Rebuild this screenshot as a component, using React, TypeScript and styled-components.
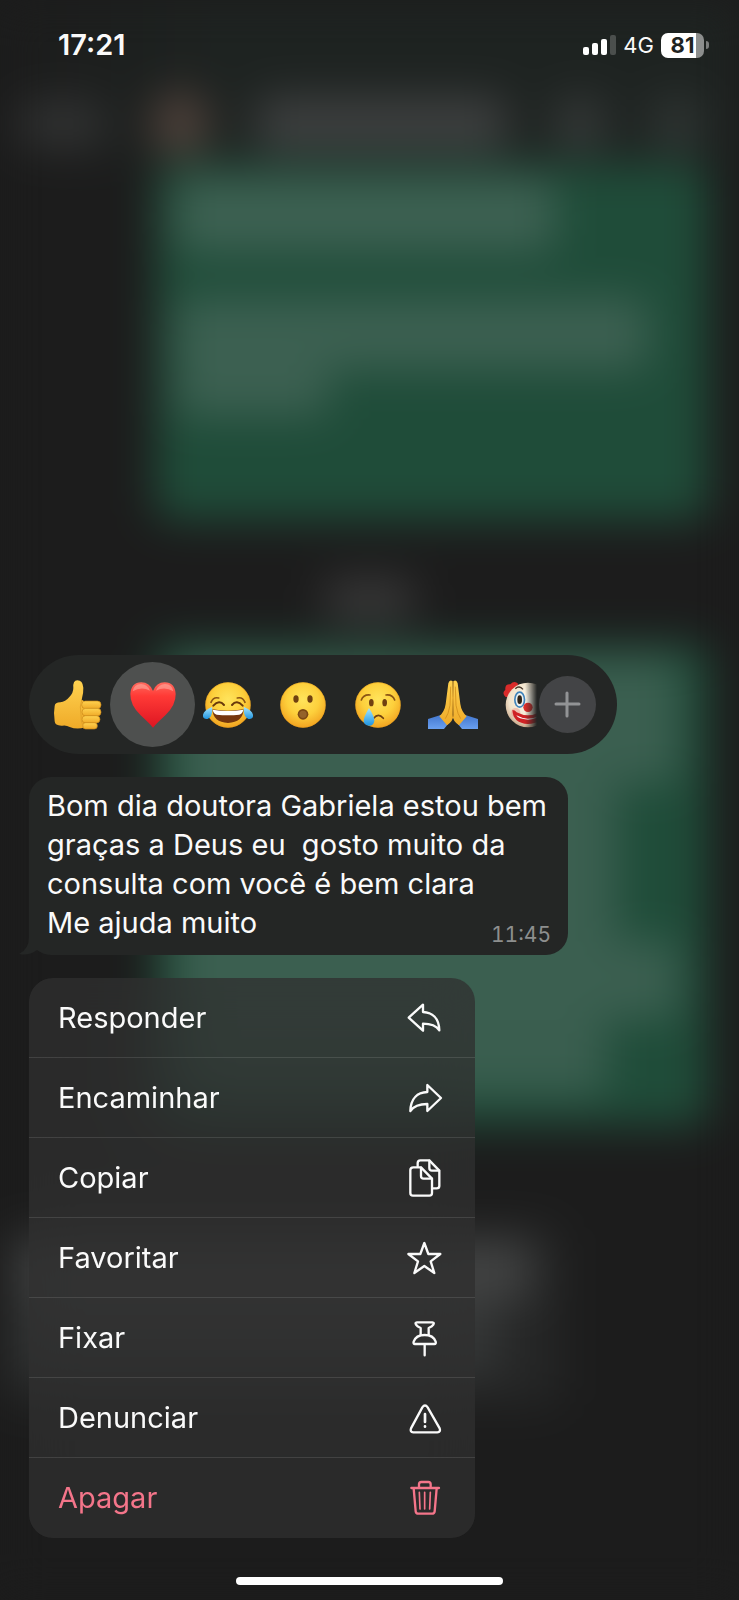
import React from 'react';
import styled, { createGlobalStyle } from 'styled-components';

const GlobalStyle = createGlobalStyle`
  *, *::before, *::after { box-sizing: border-box; }
  body {
    margin: 0;
    background: #1c1c1c;
    color: #fafafa;
    font-family: Inter, "Liberation Sans", sans-serif;
  }
  button { font: inherit; color: inherit; background: none; border: 0; padding: 0; cursor: pointer; }
`;

const Screen = styled.div`
  position: relative;
  display: flex;
  flex-direction: column;
  min-height: 100vh;
  overflow: hidden;
  isolation: isolate;
`;

/* Blurred conversation behind the overlay */

const Backdrop = styled.div`
  position: absolute;
  inset: 0;
  z-index: -1;
  display: flex;
  flex-direction: column;
  background: #1c1c1c;
  filter: blur(22px);
`;

const BlurHeader = styled.div`
  display: flex;
  align-items: center;
  gap: 48px;
  height: 164px;
  padding: 84px 20px 0 20px;
  background: linear-gradient(to right, #1c1c1c, #1e2321 30%, #1e2321);
`;

const Smudge = styled.div<{ $w: string; $h: number; $color: string; $round?: boolean }>`
  flex: none;
  width: ${p => p.$w};
  height: ${p => p.$h}px;
  background: ${p => p.$color};
  border-radius: ${p => (p.$round ? '50%' : '12px')};
`;

const BlurBubble = styled.div<{ $incoming?: boolean; $h: number }>`
  flex: none;
  display: flex;
  flex-direction: column;
  align-items: flex-start;
  width: ${p => (p.$incoming ? '76%' : '75%')};
  height: ${p => p.$h}px;
  margin-right: ${p => (p.$incoming ? '0' : '30px')};
  align-self: ${p => (p.$incoming ? 'flex-start' : 'flex-end')};
  padding: 14px 20px 0;
  border-radius: 16px;
  background: ${p => (p.$incoming ? '#252626' : '#1f4c39')};
`;

const BlurGap = styled.div<{ $h: number; $top?: number }>`
  flex: none;
  display: flex;
  align-items: center;
  justify-content: center;
  height: ${p => p.$h}px;
  padding-top: ${p => p.$top ?? 0}px;
`;

/* Status bar */

const StatusBar = styled.header`
  display: flex;
  align-items: center;
  justify-content: space-between;
  height: 90px;
  padding: 0 30px 0 58px;
`;

const Clock = styled.time`
  font-size: 29px;
  line-height: 36px;
  font-weight: 600;
`;

const StatusIcons = styled.div`
  display: flex;
  align-items: center;
  gap: 7px;
`;

const Network = styled.span`
  font-size: 22px;
  line-height: 26px;
`;

const Battery = styled.div`
  display: flex;
  align-items: center;
  gap: 2px;
`;

const BatteryBody = styled.div`
  width: 43px;
  height: 25px;
  border-radius: 7px;
  background: linear-gradient(to right, #fff 81%, #8c8e8d 81%);
  color: #1e2321;
  font-size: 22px;
  line-height: 25px;
  font-weight: 700;
  text-align: center;
`;

const BatteryTip = styled.div`
  width: 3px;
  height: 8px;
  border-radius: 0 4px 4px 0;
  background: #7b7d7c;
`;

/* Overlay content */

const Overlay = styled.main`
  display: flex;
  flex-direction: column;
  gap: 23px;
  margin-top: auto;
  padding: 0 29px 39px;
`;

const ReactionBar = styled.div`
  display: flex;
  align-items: center;
  width: 588px;
  max-width: 100%;
  height: 99px;
  padding: 0 21px 0 11px;
  border-radius: 50px;
  background: #242625;
`;

const ReactionList = styled.div`
  display: flex;
  align-items: center;
  flex: 1;
  min-width: 0;
  overflow: hidden;
  mask-image: linear-gradient(to right, #000 calc(100% - 14px), transparent calc(100% - 2px));
`;

const Reaction = styled.button<{ $selected?: boolean }>`
  flex: none;
  display: grid;
  place-items: center;
  width: ${p => (p.$selected ? 85 : 75)}px;
  height: 85px;
  margin: ${p => (p.$selected ? '0 -5px' : '0')};
  border-radius: 50%;
  background: ${p => (p.$selected ? '#4e504f' : 'none')};
`;

const MoreButton = styled.button`
  flex: none;
  display: grid;
  place-items: center;
  width: 57px;
  height: 57px;
  border-radius: 50%;
  background: #434446;
`;

const Bubble = styled.article`
  position: relative;
  width: 539px;
  max-width: 100%;
  padding: 9px 17px 7px 18px;
  border-radius: 22px;
  background: #242625;
`;

const BubbleTail = styled.svg`
  position: absolute;
  left: -10px;
  bottom: 0;
`;

const MessageText = styled.p`
  margin: 0;
  font-size: 29px;
  line-height: 39px;
  white-space: pre-wrap;
`;

const MessageLine = styled.span`
  display: flex;
  align-items: flex-start;
  justify-content: space-between;
`;

const SentAt = styled.time`
  padding-top: 19px;
  font-size: 21px;
  line-height: 26px;
  font-variant-numeric: tabular-nums;
  color: #8d8f8e;
`;

const Menu = styled.ul`
  width: 446px;
  max-width: 100%;
  margin: 0;
  padding: 0 0 1px;
  list-style: none;
  overflow: hidden;
  border-radius: 24px;
  background: rgba(47, 47, 47, 0.76);
  backdrop-filter: blur(24px);
`;

const MenuItem = styled.li`
  & + & { border-top: 1px solid rgba(255, 255, 255, 0.11); }
`;

const MenuButton = styled.button<{ $danger?: boolean }>`
  display: flex;
  align-items: center;
  justify-content: space-between;
  width: 100%;
  height: 79px;
  padding: 0 31px 0 29px;
  font-size: 29px;
  line-height: 38px;
  color: ${p => (p.$danger ? '#f4758a' : '#fafafa')};
`;

const HomeIndicator = styled.div`
  align-self: center;
  width: 36%;
  height: 8px;
  margin-bottom: 15px;
  border-radius: 4px;
  background: #fff;
`;

/* Menu icons */

const LineIcon = ({ children }: { children: React.ReactNode }) => (
  <svg width="40" height="40" viewBox="0 0 120 120" fill="none" stroke="currentColor" strokeWidth="7"
    strokeLinecap="round" strokeLinejoin="round" aria-hidden="true">{children}</svg>
);

const menuItems: { label: string; danger?: boolean; icon: React.ReactNode }[] = [
  { label: 'Responder', icon: <path d="M14 59 57 20V42C84 43 105 60 106 97 96 82 82 77 57 77V98Z" /> },
  { label: 'Encaminhar', icon: <path d="M111 60 70 21V42C40 43 20 62 19 99 30 83 44 78 70 78V99Z" /> },
  {
    label: 'Copiar',
    icon: (
      <>
        <path d="M28 28H51L84 62V105q0 8-8 8H27q-8 0-8-8V36q0-8 9-8Z" />
        <path d="M51 29V54q0 8 8 8H83" />
        <path d="M41 25V15q0-8 8-8H76L106 38V84q0 7-8 7H86" />
        <path d="M76 8V30q0 8 8 8H105" />
      </>
    ),
  },
  { label: 'Favoritar', icon: <path d="M61 15 73 48 109 48 80 70 91 105 61 84 31 105 42 70 13 48 49 48Z" /> },
  {
    label: 'Fixar',
    icon: (
      <>
        <path d="M39 13H85Q92 14 88 20 85 25 74 30V51M50 51V30Q39 25 36 20 32 14 39 13" />
        <path d="M33 78Q27 78 29 71 36 51 62 51T95 71Q97 78 91 78ZM62 79V112" />
      </>
    ),
  },
  {
    label: 'Denunciar',
    icon: (
      <>
        <path d="M55 28Q63 17 71 28L107 91Q111 102 100 103H28Q17 102 21 91Z" />
        <path d="M63 48V72M63 85V86" strokeWidth="8" />
      </>
    ),
  },
  {
    label: 'Apagar',
    danger: true,
    icon: (
      <>
        <path d="M22 30H105M45 29V19q0-7 7-7H73q7 0 7 7V29" />
        <path d="M29 31 35 100q1 7 8 7H84q7 0 8-7L98 31" />
        <path d="M46 43 48 93M62 43V93M79 43 77 93" strokeWidth="5" />
      </>
    ),
  },
];

/* Emoji drawings */

const Emoji = ({ children }: { children: React.ReactNode }) => (
  <svg width="50" height="50" viewBox="0 0 150 150" aria-hidden="true">{children}</svg>
);

const Face = () => (
  <>
    <circle cx="75" cy="75" r="68" fill="url(#face)" />
    <circle cx="75" cy="75" r="67" fill="none" stroke="#e79a18" strokeWidth="2" opacity=".6" />
  </>
);

const GradientSheet = styled.svg`
  position: absolute;
`;

const Gradients = () => (
  <GradientSheet width="0" height="0" aria-hidden="true">
    <defs>
      <radialGradient id="face" cx=".5" cy=".38" r=".64">
        <stop offset="0" stopColor="#ffe45c" />
        <stop offset=".55" stopColor="#fdd03c" />
        <stop offset="1" stopColor="#f1a01f" />
      </radialGradient>
      <linearGradient id="skin" x1="0" y1="0" x2="0" y2="1">
        <stop offset="0" stopColor="#ffd250" />
        <stop offset="1" stopColor="#efaa28" />
      </linearGradient>
      <linearGradient id="sleeve" x1="0" y1="0" x2="0" y2="1">
        <stop offset="0" stopColor="#4377cf" />
        <stop offset="1" stopColor="#6aa0f0" />
      </linearGradient>
      <linearGradient id="heart" x1="0" y1="0" x2="0" y2="1">
        <stop offset="0" stopColor="#ff6a5e" />
        <stop offset=".3" stopColor="#ff3a36" />
        <stop offset="1" stopColor="#dd1522" />
      </linearGradient>
      <linearGradient id="tear" x1="0" y1="0" x2="0" y2="1">
        <stop offset="0" stopColor="#a5e6ff" />
        <stop offset="1" stopColor="#1f94e0" />
      </linearGradient>
      <radialGradient id="clown" cx=".5" cy=".4" r=".6">
        <stop offset="0" stopColor="#fffdf3" />
        <stop offset=".7" stopColor="#f2e3cb" />
        <stop offset="1" stopColor="#c9a98c" />
      </radialGradient>
    </defs>
  </GradientSheet>
);

const reactions: { name: string; selected?: boolean; art: React.ReactNode }[] = [
  {
    name: 'Curtir',
    art: (
      <>
        <path d="M5 78Q6 67 22 67 37 66 49 51 61 39 61 24 59 2 73 1 89 1 91 23 92 38 86 59L98 66 96 142Q72 150 50 141 40 135 28 137 6 138 5 124 1 98 5 78Z" fill="url(#skin)" />
        <g fill="url(#skin)" stroke="#ca8616" strokeWidth="2">
          <rect x="86" y="63" width="58" height="23" rx="11" />
          <rect x="87" y="85" width="57" height="23" rx="11" />
          <rect x="87" y="107" width="54" height="22" rx="11" />
          <rect x="89" y="128" width="44" height="19" rx="9" />
        </g>
        <path d="M86 60Q79 80 84 103 83 124 91 142" fill="none" stroke="#e1a12a" strokeWidth="3" />
      </>
    ),
  },
  {
    name: 'Amei',
    selected: true,
    art: (
      <>
        <path d="M75 143Q66 132 38 106 6 75 7 42 9 8 40 7 65 7 75 33 85 7 110 7 141 8 143 42 144 75 112 106 84 132 75 143Z" fill="url(#heart)" />
        <path d="M14 34Q17 13 39 12 58 12 66 32 40 18 14 34ZM84 32Q92 12 111 12 133 13 136 34 110 18 84 32Z" fill="#ffb3a8" opacity=".55" />
      </>
    ),
  },
  {
    name: 'Risada',
    art: (
      <>
        <Face />
        <path d="M24 67Q31 50 47 54M126 67Q119 50 103 54" fill="none" stroke="#8b5414" strokeWidth="5" strokeLinecap="round" />
        <path d="M31 77Q49 58 63 75M119 77Q101 58 87 75" fill="none" stroke="#68390b" strokeWidth="6" strokeLinecap="round" />
        <path d="M28 88Q75 96 122 88 120 127 75 129 30 127 28 88Z" fill="#75360e" />
        <path d="M29 89Q75 97 121 89 119 101 109 104 75 108 41 104 31 101 29 89Z" fill="#fff" />
        <path d="M27 81Q31 109 14 117-2 119 0 104 3 91 27 81ZM123 81Q119 109 136 117 152 119 150 104 147 91 123 81Z" fill="url(#tear)" />
      </>
    ),
  },
  {
    name: 'Surpresa',
    art: (
      <>
        <Face />
        <g fill="#704010">
          <ellipse cx="54" cy="57" rx="8" ry="11" />
          <ellipse cx="96" cy="57" rx="8" ry="11" />
        </g>
        <circle cx="75" cy="103" r="16" fill="#7b4814" />
        <circle cx="75" cy="103" r="11" fill="#94622a" />
      </>
    ),
  },
  {
    name: 'Triste',
    art: (
      <>
        <Face />
        <path d="M25 60Q31 43 51 45M99 45Q119 43 125 60" fill="none" stroke="#8b5414" strokeWidth="5" strokeLinecap="round" />
        <g fill="#704010">
          <ellipse cx="55" cy="68" rx="7" ry="11" />
          <ellipse cx="95" cy="68" rx="7" ry="11" />
        </g>
        <path d="M62 115Q76 97 91 115" fill="none" stroke="#704010" strokeWidth="5" strokeLinecap="round" />
        <path d="M48 84Q65 111 64 122 62 137 48 137 33 136 32 122 32 111 48 84Z" fill="url(#tear)" />
      </>
    ),
  },
  {
    name: 'Obrigado',
    art: (
      <>
        <path d="M0 117 38 105 62 130 48 147H0ZM150 117 112 105 88 130 102 147H150Z" fill="url(#sleeve)" />
        <path d="M74 4Q65-3 61 10L53 72Q50 94 34 109L57 136Q76 123 76 105ZM76 4Q85-3 89 10L97 72Q100 94 116 109L93 136Q74 123 74 105Z" fill="url(#skin)" />
        <path d="M75 4V112M68 20 66 76Q61 104 52 116M82 20 84 76Q89 104 98 116" fill="none" stroke="#c98414" strokeWidth="2" />
      </>
    ),
  },
  {
    name: 'Palhaço',
    art: (
      <>
        <path d="M8 51Q-5 39 7 29 5 12 22 13 34-1 46 12L18 52ZM142 51Q155 39 143 29 145 12 128 13 116-1 104 12L132 52Z" fill="#d92b2a" />
        <circle cx="75" cy="75" r="67" fill="url(#clown)" />
        <ellipse cx="50" cy="59" rx="17" ry="25" fill="#3f83bb" />
        <ellipse cx="50" cy="59" rx="12" ry="20" fill="#eef2ef" />
        <ellipse cx="50" cy="59" rx="7" ry="13" fill="#2f2418" />
        <path d="M37 26Q48 15 60 28" fill="none" stroke="#48372a" strokeWidth="4" />
        <circle cx="75" cy="82" r="14" fill="#dc2f2b" />
        <circle cx="38" cy="98" r="14" fill="#e99a8c" opacity=".5" />
        <path d="M28 90Q36 90 41 97 75 115 109 97L120 90Q127 128 75 132 30 130 28 90Z" fill="#cf2225" />
        <path d="M40 106Q75 126 110 106 104 117 75 119 46 117 40 106Z" fill="#fff" />
      </>
    ),
  },
];

const SignalBars = () => (
  <svg width="33" height="22" viewBox="0 0 33 22" role="img" aria-label="Sinal">
    <g fill="#fff">
      <rect y="13" width="6" height="8" rx="2" />
      <rect x="9" y="9" width="6" height="12" rx="2" />
      <rect x="18" y="5" width="6" height="16" rx="2" />
    </g>
    <rect x="27" y="1" width="6" height="20" rx="2" fill="#4b4f4d" />
  </svg>
);

const messageLines = [
  'Bom dia doutora Gabriela estou bem',
  'graças a Deus eu  gosto muito da',
  'consulta com você é bem clara',
  'Me ajuda muito',
];

export default function App() {
  return (
    <>
      <GlobalStyle />
      <Gradients />
      <Screen>
        <Backdrop aria-hidden="true">
          <BlurHeader>
            <Smudge $w="12%" $h={44} $color="#323333" />
            <Smudge $w="8%" $h={64} $color="#53443d" $round />
            <Smudge $w="36%" $h={54} $color="#3e4040" />
            <Smudge $w="7%" $h={52} $color="#363a39" />
            <Smudge $w="7%" $h={52} $color="#303634" />
          </BlurHeader>
          <BlurBubble $h={356}>
            <Smudge $w="74%" $h={74} $color="#3d6152" />
            <BlurGap $h={46} />
            <Smudge $w="92%" $h={72} $color="#3c6051" />
            <Smudge $w="30%" $h={46} $color="#3c6051" />
          </BlurBubble>
          <BlurGap $h={124} $top={36}>
            <Smudge $w="12%" $h={40} $color="#3a3a3a" />
          </BlurGap>
          <BlurBubble $h={482}>
            <Smudge $w="98%" $h={126} $color="#3b5f50" />
            <Smudge $w="86%" $h={156} $color="#3b5f50" />
            <Smudge $w="98%" $h={80} $color="#3b5f50" />
            <Smudge $w="84%" $h={76} $color="#3a5e4f" />
          </BlurBubble>
          <BlurGap $h={100} />
          <BlurBubble $incoming $h={180}>
            <Smudge $w="98%" $h={62} $color="#414242" />
            <Smudge $w="92%" $h={74} $color="#343636" />
          </BlurBubble>
        </Backdrop>

        <StatusBar>
          <Clock>17:21</Clock>
          <StatusIcons>
            <SignalBars />
            <Network>4G</Network>
            <Battery>
              <BatteryBody>81</BatteryBody>
              <BatteryTip />
            </Battery>
          </StatusIcons>
        </StatusBar>

        <Overlay>
          <ReactionBar>
            <ReactionList>
              {reactions.map(r => (
                <Reaction key={r.name} type="button" aria-label={r.name} aria-pressed={!!r.selected} $selected={r.selected}>
                  <Emoji>{r.art}</Emoji>
                </Reaction>
              ))}
            </ReactionList>
            <MoreButton type="button" aria-label="Mais reações">
              <svg width="27" height="27" viewBox="0 0 27 27" stroke="#929395" strokeWidth="3" strokeLinecap="round" aria-hidden="true">
                <path d="M13 2V25M2 13H25" />
              </svg>
            </MoreButton>
          </ReactionBar>

          <Bubble>
            <BubbleTail width="26" height="34" viewBox="0 0 26 34" aria-hidden="true">
              <path d="M10 0V16Q10 28 0 33 10 35 18 29L26 33V0Z" fill="#242625" />
            </BubbleTail>
            <MessageText>
              {messageLines.map((line, i) => (
                <MessageLine key={line}>
                  <span>{line}</span>
                  {i === messageLines.length - 1 && <SentAt>11:45</SentAt>}
                </MessageLine>
              ))}
            </MessageText>
          </Bubble>

          <Menu>
            {menuItems.map(item => (
              <MenuItem key={item.label}>
                <MenuButton type="button" $danger={item.danger}>
                  {item.label}
                  <LineIcon>{item.icon}</LineIcon>
                </MenuButton>
              </MenuItem>
            ))}
          </Menu>
        </Overlay>
        <HomeIndicator />
      </Screen>
    </>
  );
}
